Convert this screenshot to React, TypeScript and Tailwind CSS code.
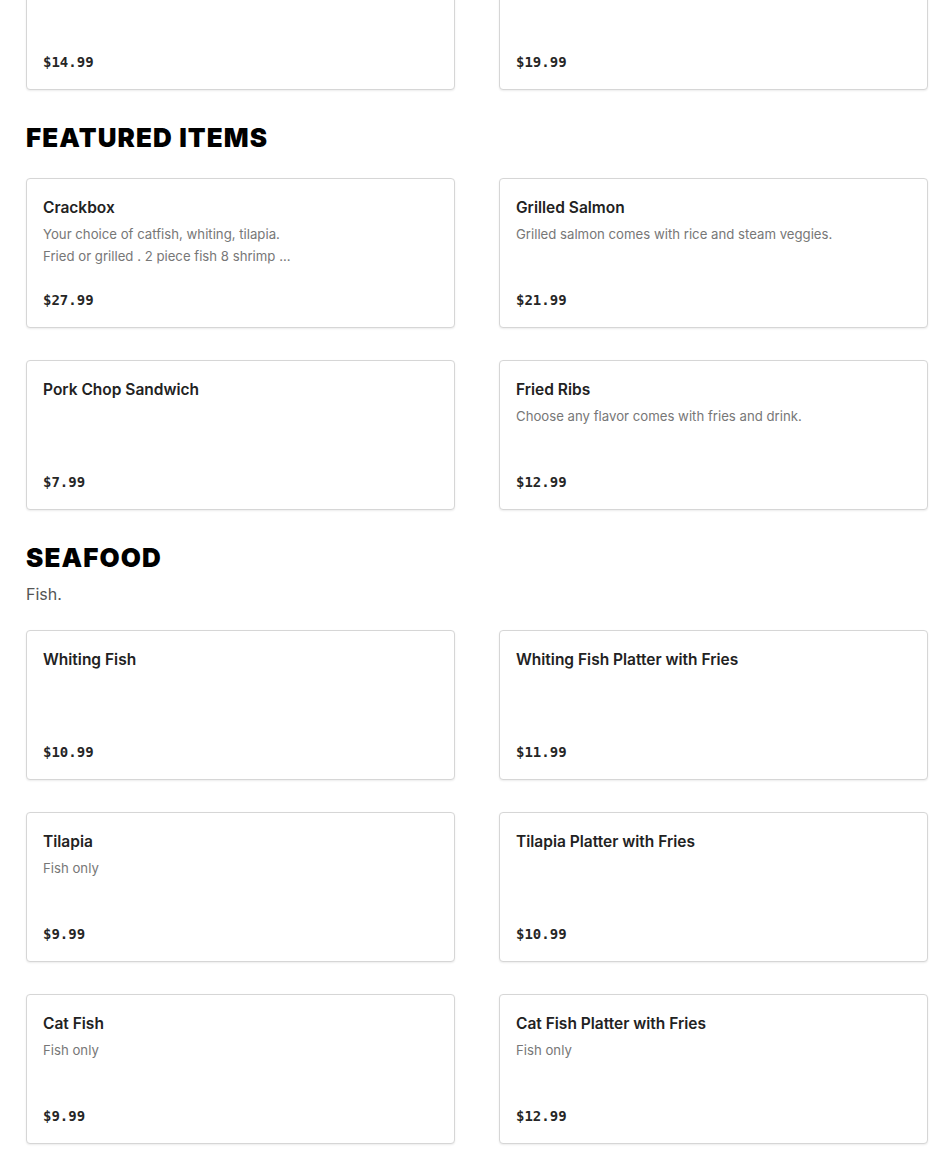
import React from 'react';

type Item = {
  name?: string;
  description?: React.ReactNode;
  price: string;
};

const ItemCard = ({ item }: { item: Item }) => (
  <div className="flex h-[150px] flex-col rounded-[4px] border border-[#d6d6d6] bg-white px-4 pt-[17px] pb-[15px] shadow-[0_1px_2px_rgba(0,0,0,0.08)]">
    {item.name && (
      <h3 className="text-[15.5px] leading-6 font-semibold text-[#222]">{item.name}</h3>
    )}
    {item.description && (
      <p className="mt-[3px] text-[13.2px] leading-[22px] text-[#777]">{item.description}</p>
    )}
    <span className="mt-auto font-['DejaVu_Sans_Mono',monospace] text-[14px] leading-6 font-bold text-[#262626]">
      {item.price}
    </span>
  </div>
);

const ItemGrid = ({ items }: { items: Item[] }) => (
  <div className="grid grid-cols-2 gap-x-[44px] gap-y-8">
    {items.map((item, i) => (
      <ItemCard key={i} item={item} />
    ))}
  </div>
);

const Section = ({ title, subtitle, items }: { title: string; subtitle?: string; items: Item[] }) => (
  <section className="mt-8">
    <h2 className="font-['Inter',sans-serif] text-[26px] leading-8 font-black tracking-[1.1px] text-black uppercase">
      {title}
    </h2>
    {subtitle && <p className="mt-2 text-[16px] leading-6 text-[#555]">{subtitle}</p>}
    <div className="mt-6">
      <ItemGrid items={items} />
    </div>
  </section>
);

const featured: Item[] = [
  {
    name: 'Crackbox',
    description: (
      <>
        Your choice of catfish, whiting, tilapia.
        <br />
        Fried or grilled . 2 piece fish 8 shrimp ...
      </>
    ),
    price: '$27.99',
  },
  { name: 'Grilled Salmon', description: 'Grilled salmon comes with rice and steam veggies.', price: '$21.99' },
  { name: 'Pork Chop Sandwich', price: '$7.99' },
  { name: 'Fried Ribs', description: 'Choose any flavor comes with fries and drink.', price: '$12.99' },
];

const seafood: Item[] = [
  { name: 'Whiting Fish', price: '$10.99' },
  { name: 'Whiting Fish Platter with Fries', price: '$11.99' },
  { name: 'Tilapia', description: 'Fish only', price: '$9.99' },
  { name: 'Tilapia Platter with Fries', price: '$10.99' },
  { name: 'Cat Fish', description: 'Fish only', price: '$9.99' },
  { name: 'Cat Fish Platter with Fries', description: 'Fish only', price: '$12.99' },
];

export default function App() {
  return (
    <div className="h-[1173px] overflow-hidden bg-white font-['Inter',sans-serif]">
      <div className="-mt-[60px] px-[26px] pr-[22px]">
        <ItemGrid items={[{ price: '$14.99' }, { price: '$19.99' }]} />
        <Section title="Featured Items" items={featured} />
        <Section title="Seafood" subtitle="Fish." items={seafood} />
      </div>
    </div>
  );
}
